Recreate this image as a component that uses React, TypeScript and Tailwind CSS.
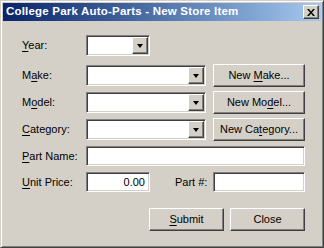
import React from "react";

const sunken =
  "border border-t-[#808080] border-l-[#808080] border-r-white border-b-white shadow-[inset_1px_1px_0_#404040,inset_-1px_-1px_0_#d4d0c8] bg-white";
const raised =
  "border border-t-white border-l-white border-r-[#404040] border-b-[#404040] shadow-[inset_-1px_-1px_0_#808080] bg-[#d4d0c8]";

function U({ children }: { children: React.ReactNode }) {
  return <span className="underline underline-offset-[2px]">{children}</span>;
}

function Combo({ width }: { width: string }) {
  return (
    <div className={`${sunken} ${width} h-[21px] flex justify-end p-[1px]`}>
      <div className={`${raised} w-[16px] h-[17px] flex items-center justify-center`}>
        <div className="w-0 h-0 border-l-[3.5px] border-r-[3.5px] border-t-[4px] border-l-transparent border-r-transparent border-t-black" />
      </div>
    </div>
  );
}

function Btn({ children, width }: { children: React.ReactNode; width: string }) {
  return (
    <div className={`${raised} ${width} h-[23px] flex items-center justify-center`}>
      {children}
    </div>
  );
}

function Label({ children }: { children: React.ReactNode }) {
  return <div className="w-[64px] shrink-0">{children}</div>;
}

export default function App() {
  return (
    <div
      className="w-[324px] h-[248px] bg-[#d4d0c8] border border-t-[#d4d0c8] border-l-[#d4d0c8] border-r-[#404040] border-b-[#404040] shadow-[inset_1px_1px_0_#fff,inset_-1px_-1px_0_#808080] p-[2px] text-[11px] leading-none text-black"
      style={{ fontFamily: '"Liberation Sans", Arial, sans-serif' }}
    >
      {/* Titelbalk */}
      <div className="h-[18px] flex items-start bg-gradient-to-r from-[#0a246a] to-[#a6caf0]">
        <span className="pl-[3px] pt-[3px] font-bold text-white text-[11.5px] tracking-[0.2px]">
          College Park Auto-Parts - New Store Item
        </span>
        <div className="ml-auto mr-[2px] mt-[2px] w-[16px] h-[14px] border border-t-white border-l-white border-r-[#404040] border-b-[#404040] shadow-[inset_-1px_-1px_0_#808080] bg-[#d4d0c8] flex items-center justify-center">
          <svg width="8" height="7" viewBox="0 0 8 7">
            <path d="M0 0h2l2 2.5L6 0h2L5 3.5 8 7H6L4 4.5 2 7H0l3-3.5z" fill="#000" />
          </svg>
        </div>
      </div>

      {/* Formulier */}
      <div className="pl-[19px] pt-[14px] flex flex-col">
        <div className="flex items-center h-[21px]">
          <Label>
            <U>Y</U>ear:
          </Label>
          <Combo width="w-[64px]" />
        </div>

        <div className="flex items-center h-[23px] mt-[8px]">
          <Label>
            M<U>a</U>ke:
          </Label>
          <Combo width="w-[120px]" />
          <div className="ml-[7px]">
            <Btn width="w-[92px]">
              New&nbsp;<U>M</U>ake...
            </Btn>
          </div>
        </div>

        <div className="flex items-center h-[23px] mt-[4px]">
          <Label>
            M<U>o</U>del:
          </Label>
          <Combo width="w-[120px]" />
          <div className="ml-[7px]">
            <Btn width="w-[92px]">
              New&nbsp;Mo<U>d</U>el...
            </Btn>
          </div>
        </div>

        <div className="flex items-center h-[23px] mt-[4px]">
          <Label>
            <U>C</U>ategory:
          </Label>
          <Combo width="w-[120px]" />
          <div className="ml-[7px]">
            <Btn width="w-[92px]">
              New&nbsp;Ca<U>t</U>egory...
            </Btn>
          </div>
        </div>

        <div className="flex items-center h-[20px] mt-[5px]">
          <Label>
            <U>P</U>art Name:
          </Label>
          <div className={`${sunken} w-[219px] h-[20px]`} />
        </div>

        <div className="flex items-center h-[20px] mt-[6px]">
          <Label>
            <U>U</U>nit Price:
          </Label>
          <div className={`${sunken} w-[64px] h-[20px] flex items-center justify-end pr-[4px]`}>
            0.00
          </div>
          <div className="ml-[25px] w-[38px]">Part #:</div>
          <div className={`${sunken} w-[92px] h-[20px]`} />
        </div>

        <div className="flex h-[23px] mt-[16px] pl-[127px] gap-[6px]">
          <Btn width="w-[75px]">
            <U>S</U>ubmit
          </Btn>
          <Btn width="w-[75px]">Close</Btn>
        </div>
      </div>
    </div>
  );
}
